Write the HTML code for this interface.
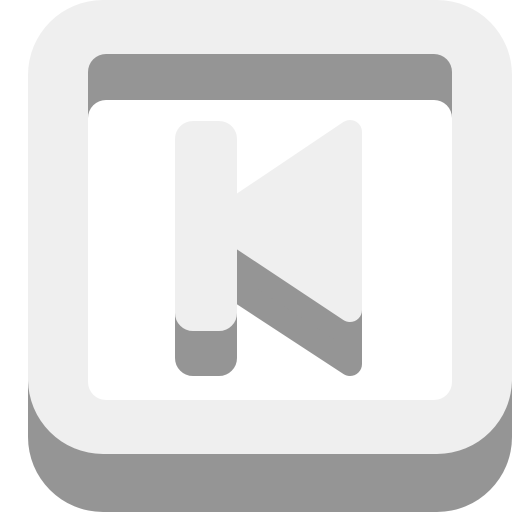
<!DOCTYPE html>
<html><head><style>html,body{margin:0;padding:0;background:#fff;width:512px;height:512px;overflow:hidden}</style></head>
<body>
<svg width="512" height="512" viewBox="0 0 512 512" xmlns="http://www.w3.org/2000/svg">
<rect x="28" y="40" width="484" height="472" rx="75" fill="#959595"/>
<rect x="28" y="0" width="484" height="454" rx="75" fill="#efefef"/>
<rect x="88" y="54" width="364" height="300" rx="18" fill="#959595"/>
<rect x="88" y="100" width="364" height="300" rx="18" fill="#fff"/>
<g fill="#959595" stroke="#959595" stroke-linejoin="round" stroke-width="24">
<rect x="187" y="178" width="38" height="186" rx="6"/>
<path d="M350 178 L350 364 L237 290 L237 250 Z"/>
</g>
<g fill="#efefef" stroke="#efefef" stroke-linejoin="round" stroke-width="24">
<rect x="187" y="133" width="38" height="186" rx="6"/>
<path d="M350 132 L350 310 L237 235 L237 208 Z"/>
</g>
</svg>
</body></html>
